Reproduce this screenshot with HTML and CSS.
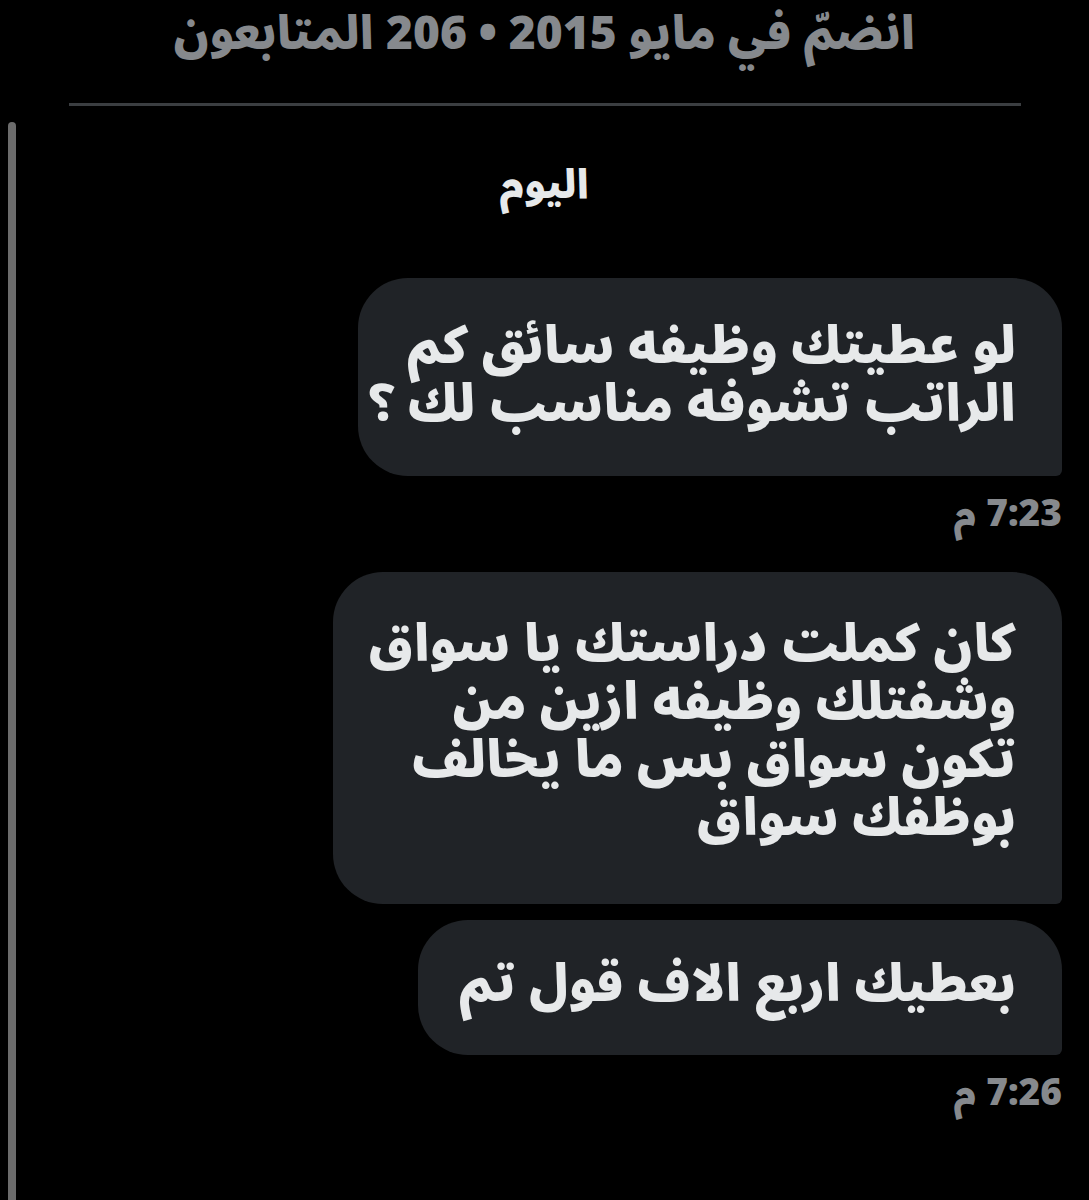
FILE: index.html
```html
<!DOCTYPE html>
<html lang="ar" dir="rtl">
<head>
    <meta charset="UTF-8">
    <meta name="viewport" content="width=device-width, initial-scale=1.0">
    <title>الرسائل</title>
    <link rel="stylesheet" href="styles.css">
</head>
<body>
    <div class="profile-meta">انضمّ في مايو 2015 • 206 المتابعون</div>
    <div class="divider"></div>

    <div class="chat">
        <div class="scrollbar"></div>

        <div class="day-label">اليوم</div>

        <div class="bubble bubble-first">لو عطيتك وظيفه سائق كم<br>الراتب تشوفه مناسب لك ؟</div>
        <div class="time">7:23 م</div>

        <div class="bubble bubble-second">كان كملت دراستك يا سواق<br>وشفتلك وظيفه ازين من<br>تكون سواق بس ما يخالف<br>بوظفك سواق</div>
        <div class="bubble bubble-third">بعطيك اربع الاف قول تم</div>
        <div class="time">7:26 م</div>
    </div>
</body>
</html>
```

FILE: styles.css
```css
* {
    box-sizing: border-box;
}
body {
    margin: 0;
    background-color: #000;
    color: #e7e9ea;
    font-family: "Noto Sans Arabic", "DejaVu Sans", sans-serif;
    height: 1200px;
    overflow: hidden;
}
.profile-meta {
    text-align: center;
    color: #86898d;
    font-size: 46px;
    font-weight: 900;
    line-height: 70px;
}
.divider {
    height: 3px;
    margin: 33px 68px 0 69px;
    background-color: #3b3e41;
}
.chat {
    position: relative;
    display: flex;
    flex-direction: column;
    align-items: flex-start; /* right side in rtl */
    padding: 0 27px 0 0;
    height: 1100px;
}
.scrollbar {
    position: absolute;
    left: 8px;
    top: 16px;
    bottom: 0;
    width: 8px;
    border-radius: 4px 4px 0 0;
    background-color: #6c6c6c;
}
.day-label {
    align-self: stretch;
    text-align: center;
    margin-right: -27px; /* center on the page, not the column */
    font-size: 40px;
    font-weight: 900;
    margin-top: 56px;
    line-height: 48px;
}
.bubble {
    background-color: #202327;
    border-radius: 50px 50px 6px 50px;
    font-size: 51px;
    font-weight: 900;
    line-height: 58px;
    padding: 40px 46px 42px 46px;
    white-space: nowrap;
}
.bubble-first {
    margin-top: 68px;
    width: 704px;
}
.bubble-second {
    margin-top: 34px;
    width: 729px;
    padding-top: 44px;
    padding-bottom: 56px;
}
.bubble-third {
    margin-top: 16px;
    width: 644px;
    padding-top: 36px;
    padding-bottom: 41px;
}
.time {
    color: #86898d;
    font-size: 37px;
    font-weight: 900;
    margin-top: 14px;
    line-height: 48px;
}
```
